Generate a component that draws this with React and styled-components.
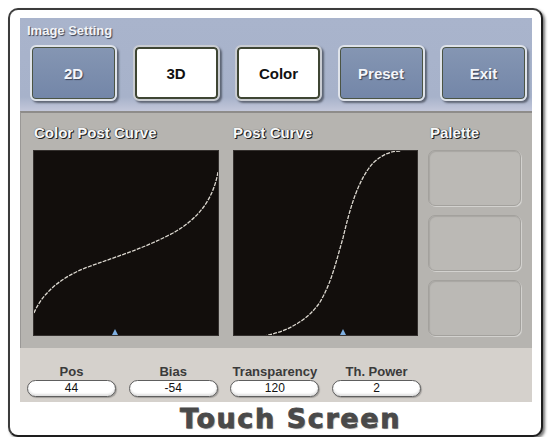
import styled, { createGlobalStyle } from "styled-components";

const GlobalStyle = createGlobalStyle`
  body {
    margin: 0;
    background: #ffffff;
    font-family: "Liberation Sans", Arial, sans-serif;
  }
`;

const Frame = styled.div`
  box-sizing: border-box;
  width: 535px;
  margin: 8px 0 0 8px;
  padding: 8px 9px 0 10px;
  background: #ffffff;
  border: 2px solid #3c3c3c;
  border-right-color: #1e1e1e;
  border-bottom-color: #1e1e1e;
  border-radius: 10px;
  box-shadow: 2px 2px 3px rgba(0, 0, 0, 0.55);
`;

const Header = styled.div`
  height: 93px;
  box-sizing: border-box;
  padding: 6px 0 10px 10px;
  background: linear-gradient(#a9b4cc 0%, #a7b2ca 85%, #c3c7da 100%);
`;

const HeaderTitle = styled.div`
  margin-left: -3px;
  font-size: 13px;
  line-height: 13px;
  font-weight: bold;
  color: #f2f4f8;
  text-shadow: 1px 1px 1px #3a4050;
`;

const ButtonRow = styled.div`
  display: flex;
  gap: 15.5px;
  margin-top: 8px;
`;

const ModeButton = styled.div`
  box-sizing: border-box;
  width: 87px;
  height: 56px;
  display: flex;
  align-items: center;
  justify-content: center;
  border-radius: 6px;
  border: 2px solid ${(p) => (p.$active ? "#c9ccd2" : "#dfe3ea")};
  background: ${(p) =>
    p.$active ? "#ffffff" : "linear-gradient(#8596b3, #7386a8)"};
  box-shadow: inset 0 0 0 ${(p) => (p.$active ? "2px #3f4634" : "1px #4b5444")},
    2px 2px 2px rgba(30, 34, 44, 0.55);
  font-size: 15px;
  font-weight: bold;
  color: ${(p) => (p.$active ? "#111111" : "#f4f6fa")};
  text-shadow: ${(p) => (p.$active ? "none" : "1px 1px 1px #3b4458")};
`;

const CurvePanel = styled.div`
  display: flex;
  height: 237px;
  box-sizing: border-box;
  padding: 11px 11px 12px 12px;
  background: #b6b4b0;
  border-top: 2px solid #8e8c8a;
  border-left: 1px solid #9a9896;
`;

const Column = styled.div`
  display: flex;
  flex-direction: column;
  width: ${(p) => p.$width}px;
  margin-right: ${(p) => p.$gap || 0}px;
`;

const PanelTitle = styled.div`
  height: 17px;
  margin: 0 0 9px ${(p) => p.$shift || 0}px;
  font-size: 15px;
  line-height: 17px;
  font-weight: bold;
  color: #f8f8f8;
  text-shadow: 1px 1px 0 #1e1e1e, 1px 0 0 #3a3a3a, 0 0 1px #444;
  white-space: nowrap;
`;

const Graph = styled.div`
  height: 186px;
  background: #120e0c;
  border: 1px solid #34302e;
  box-sizing: border-box;

  svg {
    display: block;
  }
`;

const Swatches = styled.div`
  display: flex;
  flex-direction: column;
  justify-content: space-between;
  height: 186px;
`;

const Swatch = styled.div`
  height: 54px;
  border-radius: 7px;
  background: #bbb9b5;
  border: 1px solid #a3a19d;
  box-shadow: inset 1px 1px 1px rgba(0, 0, 0, 0.1),
    1px 1px 0 rgba(255, 255, 255, 0.4);
`;

const FieldStrip = styled.div`
  display: flex;
  gap: 12.7px;
  height: 54px;
  box-sizing: border-box;
  padding: 16px 0 0 7px;
  background: #d5d1cc;
`;

const Field = styled.div`
  width: 89px;
  display: flex;
  flex-direction: column;
  align-items: center;
`;

const FieldLabel = styled.div`
  font-size: 13px;
  line-height: 15px;
  font-weight: bold;
  color: #3a3a3a;
  margin-bottom: 1px;
`;

const FieldValue = styled.div`
  box-sizing: border-box;
  width: 100%;
  height: 17px;
  border-radius: 9px;
  border: 1px solid #5e5e5e;
  background: #ffffff;
  box-shadow: inset 0 -2px 2px rgba(0, 0, 0, 0.12),
    1px 1px 1px rgba(0, 0, 0, 0.25);
  text-align: center;
  font-size: 12px;
  line-height: 15px;
  color: #111111;
`;

const Footer = styled.div`
  height: 33px;
  padding-left: 29px;
  text-align: center;
  font-family: "DejaVu Sans", "Liberation Sans", sans-serif;
  font-size: 27px;
  line-height: 33px;
  font-weight: bold;
  letter-spacing: 1.6px;
  color: #4a4a4a;
  -webkit-text-stroke: 0.8px #484848;
  text-shadow: 1px 1px 1px rgba(0, 0, 0, 0.35);
`;

const modes = [
  { label: "2D" },
  { label: "3D", active: true },
  { label: "Color", active: true },
  { label: "Preset" },
  { label: "Exit" },
];

const fields = [
  { label: "Pos", value: "44" },
  { label: "Bias", value: "-54" },
  { label: "Transparency", value: "120" },
  { label: "Th. Power", value: "2" },
];

// tone curve drawn over the black plot, with the blue position marker
const CurvePlot = ({ width, d, marker }) => (
  <svg width={width - 2} height={184} viewBox={`1 1 ${width - 2} 184`}>
    <path
      d={d}
      fill="none"
      stroke="#dcd8d0"
      strokeWidth="1.3"
      strokeDasharray="4 1.2"
    />
    <polygon
      points={`${marker - 3.5},186 ${marker + 3.5},186 ${marker},179`}
      fill="#7eaee0"
    />
  </svg>
);

const colorCurve =
  "M1,163 C8,146 25,128 55,117 C85,106 112,98 140,83 C165,69 180,50 185,22";
const postCurve =
  "M30,186 C50,183 74,172 87,152 C99,132 104,108 110,88 C117,58 125,30 140,13 C150,4 158,1 168,1";

const App = () => {
  return (
    <>
      <GlobalStyle />
      <Frame>
        <Header>
          <HeaderTitle>Image Setting</HeaderTitle>
          <ButtonRow>
            {modes.map((m) => (
              <ModeButton key={m.label} $active={m.active}>
                {m.label}
              </ModeButton>
            ))}
          </ButtonRow>
        </Header>

        <CurvePanel>
          <Column $width={186} $gap={14}>
            <PanelTitle $shift={1}>Color Post Curve</PanelTitle>
            <Graph>
              <CurvePlot width={186} d={colorCurve} marker={82} />
            </Graph>
          </Column>
          <Column $width={185} $gap={10}>
            <PanelTitle>Post Curve</PanelTitle>
            <Graph>
              <CurvePlot width={185} d={postCurve} marker={110} />
            </Graph>
          </Column>
          <Column $width={94}>
            <PanelTitle $shift={2}>Palette</PanelTitle>
            <Swatches>
              <Swatch />
              <Swatch />
              <Swatch />
            </Swatches>
          </Column>
        </CurvePanel>

        <FieldStrip>
          {fields.map((f) => (
            <Field key={f.label}>
              <FieldLabel>{f.label}</FieldLabel>
              <FieldValue>{f.value}</FieldValue>
            </Field>
          ))}
        </FieldStrip>

        <Footer>Touch Screen</Footer>
      </Frame>
    </>
  );
};

export default App;
